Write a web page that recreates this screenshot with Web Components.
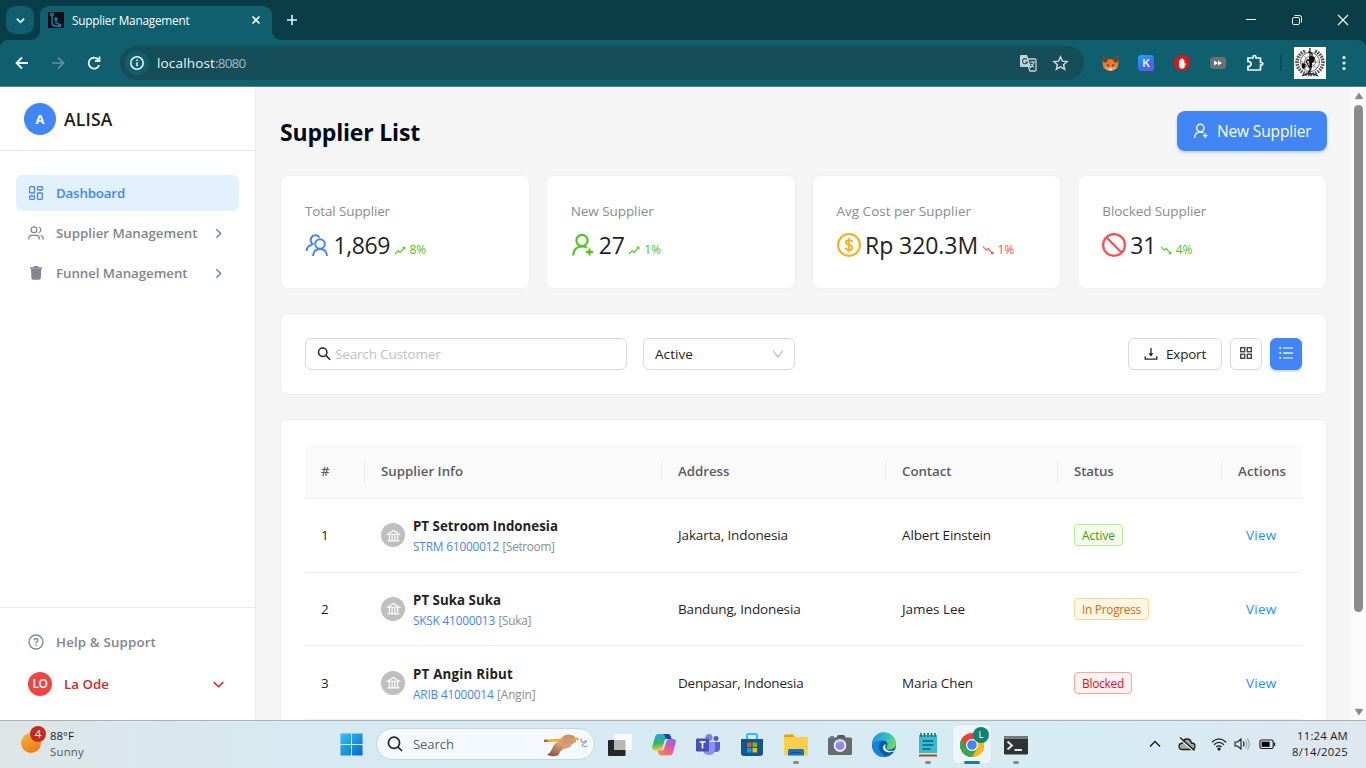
<!DOCTYPE html>
<html lang="en">
<head>
<meta charset="utf-8">
<title>Supplier Management</title>
<style>
html,body{margin:0;height:100%;overflow:hidden}
body{font:13.500px/20px "Open Sans","Noto Sans",sans-serif;color:#1c1c1c;background:#f5f5f5}
</style>
</head>
<body>
<desktop-screen></desktop-screen>
<script>
const bank = '<path d="M2 7.500 9 3l7 4.500zM4 8v7M7.300 8v7M10.700 8v7M14 8v7M2 15.500h14"/>';
const S = (c, w, body) => `<g fill="none" stroke="${c}" stroke-width="${w}">${body}</g>`;
const ICONS = {
  chevDown: ['0 0 12 12', S('currentColor', 1.8, '<path d="M2 4l4 4 4-4"/>')],
  chevThin: ['0 0 12 12', S('currentColor', 1.350, '<path d="M1.600 3.800l4.400 4.300 4.400-4.300"/>')],
  favicon: ['0 0 16 16', '<rect width="16" height="16" fill="#0b0f14"/>' + S('#1687bd', 1.3, '<circle cx="4" cy="2.500" r="1.300"/><path d="M4 4v7q0 3 3 3h3"/><circle cx="11.500" cy="13.500" r="1.300"/><circle cx="8" cy="7" r="1"/><path d="M8 8v3l3 1"/>')],
  x: ['0 0 12 12', S('currentColor', 1.6, '<path d="M2.500 2.500l7 7m0-7l-7 7"/>')],
  plus: ['0 0 12 12', S('currentColor', 1.6, '<path d="M1 6h10M6 1v10"/>')],
  min: ['0 0 12 12', S('#fff', 1, '<path d="M1 5.500h10"/>')],
  restore: ['0 0 12 12', S('#fff', 1, '<rect x="1.500" y="3.500" width="7" height="7" rx="1.200"/><path d="M3.500 1.500h5q2 0 2 2v5"/>')],
  close: ['0 0 12 12', S('#fff', 1.100, '<path d="M1 1l10 10m0-10L1 11"/>')],
  back: ['0 0 16 16', S('currentColor', 1.8, '<path d="M14 8H3M8 2.500L2.500 8 8 13.500"/>')],
  fwd: ['0 0 16 16', S('currentColor', 1.7, '<path d="M2 8h11M8 2.500L13.500 8 8 13.500"/>')],
  reload: ['0 0 16 16', S('currentColor', 1.8, '<path d="M13.200 10.200A5.500 5.500 0 1 1 12.300 4.500L13.500 6"/><path d="M13.500 1.500V6H9"/>')],
  info: ['0 0 16 16', S('currentColor', 1.5, '<circle cx="8" cy="8" r="6.200"/><path d="M8 7.200v4M8 4.500v1.500"/>')],
  translate: ['0 0 18 18', '<path d="M1 2q0-1 1-1h6l4 12H2q-1 0-1-1z" fill="#c3d2d6"/><path d="M9 5h7q1 0 1 1v10q0 1-1 1h-5l-1.500-4" fill="none" stroke="#c3d2d6" stroke-width="1.300"/><path d="M8 5.500A2.600 2.600 0 1 0 8.500 8H6.300" fill="none" stroke="#27525c" stroke-width="1.100"/><path d="M11 8h5M13.500 7v1M15 8q-1 4-4 6M12 10l3 3.500" fill="none" stroke="#c3d2d6" stroke-width="1.100"/>'],
  star: ['0 0 16 16', S('#c9d7da', 1.4, '<path d="M8 1.800l1.800 4 4.400.4-3.300 2.900 1 4.300L8 11.100l-3.900 2.300 1-4.300L1.800 6.200l4.400-.4z"/>')],
  fox: ['0 0 18 18', '<path d="M1 1L7 4.500h4L17 1l.3 7.500-.8 5L12.500 16l-1.500 1H7l-1.500-1-4-2.500-.8-5z" fill="#ee7a30"/><path d="M1 1L7 4.500 4 8.500 1.200 7zM17 1l-6 3.500 3 4L16.800 7z" fill="#7d3c14"/><path d="M4.500 9.500l3 1-.5 2zM13.500 9.500l-3 1 .5 2z" fill="#24344a"/><path d="M2 13.500l4.500-.5.5 3.500-1.500-.5zM16 13.500l-4.500-.5-.5 3.500 1.500-.5z" fill="#f6a467"/><path d="M7 13.500h4l-.500 3h-3z" fill="#e3d6ca"/>'],
  puzzle: ['0 0 18 18', S('#f1f8fa', 1.700, '<path d="M2 4h5V3q0-1.500 1.500-1.500T10 3v1h4.500v4.500h1q1.300 0 1.300 1.300t-1.300 1.300h-1V16H2v-3.500q3 0 3-2.600T2 7.500z"/>')],
  emblem: ['0 0 32 32', '<rect width="32" height="32" fill="#fff"/><g fill="none" stroke="#555"><path d="M11 4Q3 8 3 16q1 9 12 12M21 4q8 4 8 12-1 9-12 12" stroke-width="3.600" stroke-dasharray="1.700 1"/><circle cx="16" cy="15" r="9.500" stroke-width=".9"/><circle cx="16" cy="15" r="5.500" stroke-width=".8"/><path d="M7 15h18M9.500 8.500l13 13M22.500 8.500l-13 13" stroke-width=".6"/><path d="M16 1v28M14 5q5 0 4 4t-4 4 0 5 3 4-3 4M8 29q8-5 16 0" stroke="#222" stroke-width="1.300"/></g><path d="M8 16l4 1-1 2 1 1-2 2-2-1zM15 10l4-1 2 2-1 4-2 1v5l-2-1z" fill="#111"/>'],
  dots: ['0 0 16 16', '<g fill="#edf6f8"><circle cx="8" cy="2.500" r="1.600"/><circle cx="8" cy="8" r="1.600"/><circle cx="8" cy="13.500" r="1.600"/></g>'],
  dash: ['0 0 16 16', S('currentColor', 1.300, '<rect x="1.700" y="1.700" width="4.800" height="6.300" rx=".8"/><rect x="9.500" y="1.700" width="4.800" height="3.300" rx=".8"/><rect x="1.700" y="11" width="4.800" height="3.300" rx=".8"/><rect x="9.500" y="8" width="4.800" height="6.300" rx=".8"/>')],
  users: ['0 0 16 16', S('currentColor', 1.250, '<circle cx="6" cy="4.800" r="2.900"/><path d="M.8 14.600v-1.500q0-2.800 2.800-2.800h4.800q2.800 0 2.800 2.800v1.500M10.700 2a2.900 2.900 0 0 1 0 5.600M12.600 10.500q2.600.5 2.600 2.800v1.300"/>')],
  trash: ['0 0 16 16', '<path d="M2 2.300h3.500L6.300 1h3.400l.8 1.300H14v1.400H2zM3 4h10.300l-.5 9q-.1 1.700-1.600 1.700H5q-1.500 0-1.600-1.700z" fill="currentColor"/>'],
  right: ['0 0 12 12', S('currentColor', 1.400, '<path d="M4 2l4 4-4 4"/>')],
  help: ['0 0 16 16', S('currentColor', 1.300, '<circle cx="8" cy="8" r="7"/><path d="M6 6.400Q6.200 4.500 8.100 4.500 10 4.600 10 6.200q0 1-1.100 1.500-.9.400-.9 1.500M8 10.500v1.400"/>')],
  team: ['0 0 24 24', S('#4285f4', 2, '<circle cx="15" cy="11" r="4.800"/><path d="M8 23q.500-7 7-7t7 7M1.500 18q.5-5 5.500-6.200M8.500 11.500A4.800 4.800 0 1 1 14.500 4.500"/>')],
  userAdd: ['0 0 24 24', S('#52c41a', 2.200, '<circle cx="11" cy="7.500" r="5.600"/><path d="M2.200 22.500q.4-9 8.800-9 3.200 0 5 1.500M18.500 15.500v7M15 19h7"/>')],
  userAddW: ['0 0 24 24', S('#fff', 2, '<circle cx="11" cy="7.500" r="5.600"/><path d="M2.200 22.500q.4-9 8.800-9 3.200 0 5 1.500M18.500 15.500v7M15 19h7"/>')],
  dollar: ['0 0 24 24', S('#faad14', 2, '<circle cx="12" cy="12" r="10.900"/>') + S('#faad14', 1.700, '<path d="M15.300 9Q15 7 12 7T8.800 9.300q0 2 3.200 2.600t3.300 2.700Q15.200 17 12 17t-3.400-2.400M12 5v14"/>')],
  stop: ['0 0 24 24', S('#ff4d4f', 2.200, '<circle cx="12" cy="12" r="10.900"/><path d="M4.500 4.500l15 15"/>')],
  up: ['0 0 12 12', S('currentColor', 1.100, '<path d="M1 10l3.200-3.200 2 1.600 4-4.700"/>') + '<path d="M8.300 2.800h3.100v3.100z" fill="currentColor"/>'],
  down: ['0 0 12 12', S('currentColor', 1.100, '<path d="M1 2.500l3.200 3.700 2-1.600 4 4.700"/>') + '<path d="M8.300 10.200h3.100V7.100z" fill="currentColor"/>'],
  search: ['0 0 14 14', S('currentColor', 1.500, '<circle cx="5.700" cy="5.300" r="4.200"/><path d="M8.800 8.400l4.400 4.400"/>')],
  selDown: ['0 0 12 12', S('#bfbfbf', 1.200, '<path d="M1 2.700l5 6.500 5-6.500"/>')],
  export: ['0 0 14 14', S('#262626', 1.300, '<path d="M7 1v8M1.200 9.200v3h11.600v-3"/>') + '<path d="M4.500 6.300h5L7 9.400z" fill="#262626"/>'],
  grid: ['0 0 14 14', S('#444', 1.400, '<rect x="1.700" y="1.700" width="4" height="4"/><rect x="8.300" y="1.700" width="4" height="4"/><rect x="1.700" y="8.300" width="4" height="4"/><rect x="8.300" y="8.300" width="4" height="4"/>')],
  list: ['0 0 14 14', '<g fill="#fff"><path d="M4 1.500h10v1H4zM4 11.500h10v1H4z"/><path d="M4 6h10v2H4z" opacity=".65"/><circle cx="1.200" cy="2" r="1"/><circle cx="1.200" cy="7" r="1"/><circle cx="1.200" cy="12" r="1"/></g>'],
  bank: ['0 0 18 18', S('#fff', 1.350, bank)],
  win: ['0 0 24 24', '<defs><linearGradient id="w" x2="1" y2="1"><stop stop-color="#35c0fa"/><stop offset="1" stop-color="#0669c8"/></linearGradient></defs><path d="M.5.500h11v11H.5zM12.500.5h11v11h-11zM.5 12.500h11v11H.5zM12.500 12.500h11v11h-11z" fill="url(#w)"/>'],
  search2: ['0 0 16 16', S('#222', 1.700, '<circle cx="7" cy="6.800" r="5.600"/><path d="M11 11l4 4"/>')],
  hand: ['0 0 46 26', '<defs><linearGradient id="h" x1=".9" y1="0" x2=".2" y2="1"><stop stop-color="#c08a66"/><stop offset=".5" stop-color="#d9a27c"/><stop offset="1" stop-color="#8d5a3c"/></linearGradient></defs><path d="M4 24q4-3 6-9 2-4 6-6 4-6 9-6.500 5 0 7 3 2 1.500 1 4-2 2.500-4 3-1 4-6 4.500-4 1-6 3.500-1 3-2 4-6 1.500-11-.5z" fill="url(#h)"/><path d="M1 8l5-.3L34 6l3 1.200-3 1.300L6 10.300 1 10.300z" fill="#f4a92d"/><path d="M1 8h3.500v2.300H1z" fill="#d8455f"/><path d="M19 8q4-4.500 8-3.500l4 2.500-4 1.500q-3 1-4 4.500" fill="#cf9470"/><path d="M38 7l1 4 4-2q2 1-2 3t0 3 3-1" fill="none" stroke="#75828a" stroke-width=".9"/>'],
  task: ['0 0 24 24', '<rect y="7" width="17.500" height="16" rx="1" fill="#262626"/><rect x="6" y="1" width="18" height="16" rx="1" fill="#fafafa"/><rect x="6" y="7" width="11.500" height="10" fill="#b5b7b8"/>'],
  copilot: ['0 0 24 24', '<defs><linearGradient id="ca" x2=".2" y2="1"><stop stop-color="#17a9ef"/><stop offset=".6" stop-color="#35b36a"/><stop offset="1" stop-color="#ecd02b"/></linearGradient><linearGradient id="cb" x1="1" x2=".2" y2="1"><stop stop-color="#7c6cf5"/><stop offset=".5" stop-color="#e455a8"/><stop offset="1" stop-color="#ff8746"/></linearGradient></defs><path d="M7 1h9q2 0 2.500 2l1 3h-4.500q-2 0-2.600 2l-2 7q-.7 2.500-3 2.500H3q-3.500 0-2.700-4L3 4q.7-3 4-3z" fill="url(#ca)"/><path d="M17 22.500H9q-2 0-2.600-2l-1-3h4.100q2 0 2.600-2l2.200-7Q15 6 17.500 6H21q3.500 0 2.700 4L21 19.500q-.7 3-4 3z" fill="url(#cb)"/><path d="M12 1h4q2 0 2.500 2l1 3h-4q-2 0-2.500-2z" fill="#1548bd"/>'],
  teams: ['0 0 24 24', '<circle cx="13" cy="4.500" r="3.600" fill="#7b83eb"/><circle cx="20" cy="5.500" r="2.500" fill="#5059c9"/><path d="M15 9h9v6q0 4-4 4h-4z" fill="#5b61d0"/><path d="M7 9h12v7q0 6-6 6t-6-6z" fill="#8b91ee"/><rect y="5.500" width="13" height="13" rx="1.200" fill="#464eb8"/><path d="M3.500 9h6M6.500 9v6.500" stroke="#fff" stroke-width="1.700"/>'],
  store: ['0 0 24 24', '<path d="M7 6V2.500Q7 1 8.500 1h7Q17 1 17 2.500V6" fill="none" stroke="#35b7f1" stroke-width="2"/><path d="M1 6h22v14q0 3-3 3H4q-3 0-3-3z" fill="#12558f"/><path d="M7 9.500h4.500V14H7z" fill="#f25022"/><path d="M12.500 9.500H17V14h-4.500z" fill="#7fba00"/><path d="M7 15h4.500v4.500H7z" fill="#00a4ef"/><path d="M12.500 15H17v4.500h-4.500z" fill="#ffb900"/>'],
  folder: ['0 0 24 24', '<path d="M0 3q0-1.500 1.500-1.500H9L11 4v4H0z" fill="#e0a10c"/><rect y="4" width="24" height="18.500" rx="1" fill="#ffce48"/><path d="M4 18q0-2 2-2h12q2 0 2 2v4.500H4z" fill="#1670bd"/><path d="M7 19h10v1H7z" fill="#0c4f90"/>'],
  camera: ['0 0 24 24', '<path d="M2 3h4v3H2z" fill="#25a3e3"/><path d="M8 5l2-3h6l2 3z" fill="#54595e"/><rect y="4.500" width="24" height="17.500" rx="1.500" fill="#666b70"/><circle cx="12" cy="12.500" r="6.300" fill="#f7f7f7"/><circle cx="12" cy="12.500" r="4.600" fill="#9d83e6"/><path d="M7.800 11a4.600 4.600 0 0 1 7-2.200z" fill="#73c7ef"/>'],
  edge: ['0 0 24 24', '<defs><linearGradient id="e" x1="0" y1=".2" x2="1" y2=".6"><stop stop-color="#1793dc"/><stop offset=".6" stop-color="#32c3c7"/><stop offset="1" stop-color="#76da47"/></linearGradient></defs><circle cx="12" cy="12" r="12" fill="#0c59a4"/><path d="M0 12A12 12 0 0 1 24 10.500c0 4-3 6-7 6-3 0-3-1.500-2-3 1.500-3-.5-6-4-6-4 0-8 1-11 4.500z" fill="url(#e)"/><path d="M0 12q4-5 9.500-4Q6 11 7 16q1.500 5 7 7.800Q2 25 0 12z" fill="#1685d9"/><path d="M13 14q1 4 6 4 2 0 4-1.200l-1 1.800q-9 2.500-11-3-.5-3 2.500-4.600.5 1.300-.5 3z" fill="#e4f1f6"/>'],
  note: ['0 0 24 24', '<path d="M3 2h18v18H3z" fill="#38bad3"/><path d="M3 20h18v3.500H3z" fill="#a34e16"/><path d="M3 20h18v1.500H3z" fill="#e7e1d4"/><path d="M5 0v4M8.500 0v4M12 0v4M15.500 0v4M19 0v4" stroke="#12606f" stroke-width="1.400"/><path d="M6.500 8h11M6.500 12h11M6.500 16h8" stroke="#12606f" stroke-width="1.600"/>'],
  chrome: ['0 0 24 24', '<circle cx="12" cy="12" r="12" fill="#ea4335"/><path d="M1.600 6A12 12 0 0 0 12 24l5.300-9H6.700z" fill="#34a853"/><path d="M22.400 6A12 12 0 0 1 12 24l5.200-9L12 6z" fill="#fbbc05"/><circle cx="12" cy="12" r="6" fill="#fff"/><circle cx="12" cy="12" r="4.800" fill="#4285f4"/>'],
  term: ['0 0 24 24', '<rect y="3" width="24" height="18.500" rx="1.300" fill="#303234"/><path d="M0 6V4.300Q0 3 1.300 3h21.400Q24 3 24 4.300V6z" fill="#77797b"/><path d="M3.500 8.500L8 12.500l-4.500 4M10.500 17h7.500" fill="none" stroke="#e5e5e5" stroke-width="2"/>'],
  trayUp: ['0 0 12 12', S('#1a1a1a', 1.400, '<path d="M1 8.500l5-5 5 5"/>')],
  cloud: ['0 0 18 18', '<path d="M4.500 14.500q-3.500 0-3.500-3T4.500 8q1-4 4.500-4t4.500 4q3.500 0 3.500 3.200t-3.500 3.300z" fill="#a5abad" stroke="#1d1d1d" stroke-width="1.300"/><path d="M1.500 3.800l14 12.500" stroke="#eaf2f5" stroke-width="1.200"/><path d="M2 2.500l14.500 13" stroke="#1d1d1d" stroke-width="1.400"/>'],
  wifi: ['0 0 16 16', S('#1b1b1b', 1.200, '<path d="M.8 6.300q7.200-7 14.400 0M3 8.700q5-4.700 10 0M5.300 11q2.700-2.400 5.400 0"/>') + '<circle cx="8" cy="13" r="1.500"/>'],
  vol: ['0 0 16 16', S('#1b1b1b', 1.100, '<path d="M1 6h2.500L7 3v10l-3.500-3H1zM9.200 5.700q1.700 2.300 0 4.600"/><path d="M11.300 4q3 4 0 8M13.300 2.500q4 5.500 0 11" opacity=".35"/>')],
  batt: ['0 0 18 16', S('#1b1b1b', 1.200, '<rect x="1" y="4" width="14" height="8.500" rx="1.800"/><path d="M16.500 6.500v3.500"/>') + '<rect x="2.800" y="5.700" width="8.500" height="5.100"/>'],
  sbUp: ['0 0 10 10', '<path d="M5 1.500l4 6q0 .7-.7.700H1.700Q1 8.200 1 7.500z" fill="#8b8b8b"/>'],
  sbDown: ['0 0 10 10', '<path d="M5 8.500l4-6q0-.7-.7-.7H1.700Q1 1.800 1 2.500z" fill="#8b8b8b"/>']
};
const define = (name, css, html) => customElements.define(name, class extends HTMLElement {
  connectedCallback() {
    if (this.shadowRoot) return;
    const root = this.attachShadow({ mode: 'open' });
    const t = document.createElement('template');
    const a = k => this.getAttribute(k) || '';
    t.innerHTML = `<style>:host{display:block;box-sizing:border-box}*{box-sizing:border-box}${css}</style>${typeof html === 'function' ? html(a) : html}`;
    root.append(t.content.cloneNode(true));
  }
});

/* ui-icon: name, s = width, h = height when it is not square */
define('ui-icon', ':host{display:inline-flex;flex:none}svg{display:block;overflow:visible}', a => {
  const [vb, body] = ICONS[a('name')];
  return `<svg viewBox="${vb}" width="${a('s')}" height="${a('h') || a('s')}" ${a('h') ? 'preserveAspectRatio="none"' : ''}>${body}</svg>`;
});

/* ---------- browser window frame ---------- */
define('tab-strip', `
:host{height:40px;background:#093e48;display:flex;color:#e9f4f6;padding-left:6px}
.menu{width:28px;height:28px;margin:6px 6px 0 0;border-radius:9px;background:#0f5f6f;display:grid;place-items:center}
.tab{position:relative;width:232px;height:34px;margin-top:6px;border-radius:9px 9px 0 0;background:#0f5f6f;display:flex;align-items:center;padding:0 10px 6px 8px;font-size:11.800px;color:#fff}
.tab::before,.tab::after{content:"";position:absolute;bottom:0;width:9px;height:9px}
.tab::before{left:-9px;background:radial-gradient(circle at 0 0,transparent 8.500px,#0f5f6f 9px)}
.tab::after{right:-9px;background:radial-gradient(circle at 100% 0,transparent 8.500px,#0f5f6f 9px)}
.tab fit-text{margin:0 auto 0 8px}
.add{margin:14px auto 0 14px}
.win{display:flex}.win span{width:46px;height:40px;display:grid;place-items:center}`, `
<div class="menu"><ui-icon name="chevDown" s="11"></ui-icon></div>
<div class="tab"><ui-icon name="favicon" s="16"></ui-icon><fit-text w="117.500">Supplier Management</fit-text><ui-icon name="x" s="12"></ui-icon></div>
<ui-icon class="add" name="plus" s="12"></ui-icon>
<div class="win"><span><ui-icon name="min" s="12"></ui-icon></span><span><ui-icon name="restore" s="12"></ui-icon></span><span><ui-icon name="close" s="12"></ui-icon></span></div>`);

define('address-bar', `
:host{height:47px;background:#093e48}
.bar{height:47px;background:#0f5f6f;border-bottom:1px solid #4e8793;border-radius:8px 8px 0 0;display:flex;align-items:center;color:#edf6f8;padding:0 0 0 14px}
.nav{display:flex;gap:20px}.nav .f{color:#64929d}
.omni{width:964px;height:34px;flex:none;margin-left:18px;border-radius:17px;background:#154d59;display:flex;align-items:center;padding:0 15px 0 5px}
.i{width:24px;height:24px;border-radius:50%;background:#0f5f6f;display:grid;place-items:center;margin-right:8px}
.port{color:#a4b9be;margin-right:auto}.omni .tr{margin-right:15px}
.ext{display:flex;align-items:center;margin-left:18px;gap:20px}
.ext ui-icon:first-child{margin-right:-1px}
.k{width:16px;height:16px;border-radius:3px;background:linear-gradient(150deg,#16b2ef,#4067f4 60%,#8b4df2);display:grid;place-items:center;font:700 11px/16px Lato,sans-serif}
.ad{width:16px;height:16px;border-radius:50%;background:#e3130f;display:grid;place-items:center}
.ff{width:16px;height:12px;border-radius:3px;background:#6e6f70;display:grid;place-items:center}
.sep{width:2px;height:16px;background:#0d4b57;margin:0 12px 0 16px}.dots{margin-left:10px}`, `
<div class="bar"><div class="nav"><ui-icon name="back" s="16"></ui-icon><ui-icon class="f" name="fwd" s="16"></ui-icon><ui-icon name="reload" s="16"></ui-icon></div>
<div class="omni"><span class="i"><ui-icon name="info" s="16"></ui-icon></span><fit-text w="58">localhost</fit-text><fit-text class="port" w="30.500">:8080</fit-text><ui-icon class="tr" name="translate" s="18"></ui-icon><ui-icon name="star" s="17"></ui-icon></div>
<div class="ext"><ui-icon name="fox" s="17"></ui-icon><span class="k">K</span><span class="ad"><svg width="10" height="11" viewBox="0 0 10 11"><path d="M2 5V2.500q.7-.7 1.300 0V1.200q.8-.8 1.400 0V.7q.8-.7 1.300 0v1q.9-.6 1.400.300V6l1-1q1 0 .8.800L7.500 9.500Q6.500 11 4.500 10.700 2 10.300 2 8z" fill="#fff"/></svg></span><span class="ff"><svg width="10" height="6" viewBox="0 0 10 6"><path d="M1 .5L5 3 1 5.500zM5 .5L9 3 5 5.500z" fill="#fff"/></svg></span><ui-icon name="puzzle" s="18"></ui-icon></div>
<span class="sep"></span><ui-icon name="emblem" s="32"></ui-icon><ui-icon class="dots" name="dots" s="16"></ui-icon></div>`);

/* ---------- sidebar ---------- */
define('nav-item', `
:host{height:36px;border-radius:6px;display:flex;align-items:center;padding:0 13px 0 12px;color:#7f868e;font-weight:600;font-size:13.300px}
:host([active]){background:#e3f1fe;color:#4285f4}
.t{margin-left:12px;margin-right:auto}.r{margin-right:1px}`,
a => `<ui-icon name="${a('icon')}" s="16"></ui-icon><span class="t"><slot></slot></span>${a('more') ? '<ui-icon class="r" name="right" s="13"></ui-icon>' : ''}`);

define('side-bar', `
:host{width:256px;background:#fff;border-right:1px solid #e9eaed;display:flex;flex-direction:column}
.brand{height:64px;border-bottom:1px solid #e7e8eb;display:flex;align-items:center;padding-left:24px;gap:8px;font-size:17.500px;font-weight:600}
.brand fit-text{margin-top:1px}
.a{width:32px;height:32px;border-radius:50%;background:#4285f4;color:#fff;font-size:13px;font-weight:700;display:grid;place-items:center}
nav{padding:24px 16px;display:grid;gap:4px}
footer{margin-top:auto;height:113px;border-top:1px solid #e9eaed;padding:16px}
.me{display:flex;align-items:center;height:36px;margin-top:6px;padding:0 14px 0 12px;color:#dc2626;font-weight:600;font-size:13.300px}
.me span{width:24px;height:24px;border-radius:50%;background:#f04444;color:#fff;font-size:12px;letter-spacing:-.6px;display:grid;place-items:center;margin-right:12px}
.me fit-text{margin-right:auto}`, `
<div class="brand"><span class="a">A</span><fit-text w="48.500">ALISA</fit-text></div>
<nav><nav-item icon="dash" active><fit-text w="69">Dashboard</fit-text></nav-item><nav-item icon="users" more="1"><fit-text w="141.500">Supplier Management</fit-text></nav-item><nav-item icon="trash" more="1"><fit-text w="131.500">Funnel Management</fit-text></nav-item></nav>
<footer><nav-item icon="help"><fit-text w="100">Help &amp; Support</fit-text></nav-item><div class="me"><span>LO</span><fit-text w="45">La Ode</fit-text><ui-icon name="chevThin" s="13"></ui-icon></div></footer>`);

/* ---------- page content ---------- */
define('stat-card', `
:host{height:114px;background:#fff;border:1px solid #f0f0f0;border-radius:8px;padding:24px}
.l{height:22px;line-height:22px;color:#8c8c8c}
.v{display:flex;align-items:center;height:38px;margin-top:4px;font-size:23px;color:#1f1f1f}
.v .n{margin-top:-1px}
.v ui-icon.m{margin-right:var(--gap,4.500px);margin-top:-1px}.ar{margin:9px 4px 0 3.500px}.p{font-size:12px;margin-top:9px}`,
a => `<div class="l"><fit-text w="${a('lw')}">${a('label')}</fit-text></div><div class="v"><ui-icon class="m" name="${a('icon')}" s="24"></ui-icon><fit-text class="n" w="${a('vw')}">${a('value')}</fit-text><ui-icon class="ar" name="${a('trend')}" s="12" style="color:${a('c')}"></ui-icon><fit-text class="p" w="16.500" style="color:${a('c')}">${a('pct')}</fit-text></div>`);

define('filter-bar', `
:host{height:82px;background:#fff;border:1px solid #f0f0f0;border-radius:8px;padding:24px;display:flex;gap:8px}
div{height:32px;border:1px solid #d9d9d9;border-radius:6px;display:flex;align-items:center;background:#fff}
.s{width:322px;padding-left:11px;color:#bfbfbf}.s ui-icon{color:#262626;margin-right:4px}
.sel{width:152px;margin:0 auto 0 8px;padding:0 10px 0 11px;justify-content:space-between}
.ex{width:94px;padding:0 15px;justify-content:space-between}
.b{width:32px;justify-content:center;padding-bottom:2px}.ex,.b{box-shadow:0 2px 0 rgba(0,0,0,.02)}
.on{background:#4285f4;border-color:#4285f4;box-shadow:0 2px 2px rgba(66,133,244,.25)}`, `
<div class="s"><ui-icon name="search" s="14"></ui-icon><fit-text w="105.500">Search Customer</fit-text></div>
<div class="sel"><fit-text w="38">Active</fit-text><ui-icon name="selDown" s="12"></ui-icon></div>
<div class="ex"><ui-icon name="export" s="14"></ui-icon><fit-text w="40">Export</fit-text></div>
<div class="b"><ui-icon name="grid" s="14"></ui-icon></div><div class="b on"><ui-icon name="list" s="14"></ui-icon></div>`);

define('status-tag', `
:host{display:inline-block;height:22px;border:1px solid #b7eb8f;background:#f6ffed;color:#389e0d;border-radius:4px;padding:0 7px;font-size:11.800px;line-height:21px}
:host([kind=wait]){border-color:#ffd591;background:#fff7e6;color:#d46b08}
:host([kind=bad]){border-color:#ffa39e;background:#fff1f0;color:#cf1322}`, '<slot></slot>');

const cols = 'display:grid;grid-template-columns:60px 297px 224px 172px 164px 80px;align-items:center';
define('supplier-row', `
:host{${cols};height:73.667px;border-bottom:1px solid #f0f0f0;color:#1f1f1f}
:host>*{margin-left:16px}
.n{display:flex;align-items:center;gap:8px}
.ic{width:24px;height:24px;border-radius:50%;background:#bfbfbf;display:grid;place-items:center}
b{display:block;height:20px;font-weight:700;font-size:13.300px;line-height:23px}
.sub{height:20px;line-height:22px;font-size:11.800px;display:flex;gap:3.500px;color:#8c8c8c}.sub .c{color:#4285f4}
.v{color:#1890ff;margin-left:24px}status-tag{justify-self:start}`,
a => `<fit-text w="8">${a('n')}</fit-text><div class="n"><span class="ic"><ui-icon name="bank" s="15"></ui-icon></span><div><b><fit-text w="${a('w1')}">${a('name')}</fit-text></b><div class="sub"><fit-text class="c" w="${a('w2')}">${a('code')}</fit-text><fit-text w="${a('w3')}">[${a('alias')}]</fit-text></div></div></div><span><fit-text w="${a('w4')}">${a('city')}, Indonesia</fit-text></span><span><fit-text w="${a('w5')}">${a('contact')}</fit-text></span><status-tag kind="${a('kind')}"><fit-text w="${a('w6')}">${a('status')}</fit-text></status-tag><fit-text class="v" w="30.500">View</fit-text>`);

define('supplier-table', `
:host{background:#fff;border:1px solid #f0f0f0;border-radius:8px;padding:24px;height:420px;flex:none}
.h{${cols};height:55px;background:#fafafa;border-bottom:1px solid #f0f0f0;border-radius:8px 8px 0 0;font-weight:600;font-size:13.300px;color:#5c5c5c}
.h div{height:22px;line-height:22px;padding-left:16px;border-right:1px solid #ececec}.h div:last-child{border:0}`, `
<div class="h"><div><fit-text w="8.500">#</fit-text></div><div><fit-text w="82">Supplier Info</fit-text></div><div><fit-text w="51.500">Address</fit-text></div><div><fit-text w="49.500">Contact</fit-text></div><div><fit-text w="39.500">Status</fit-text></div><div><fit-text w="48">Actions</fit-text></div></div>
<supplier-row n="1" name="PT Setroom Indonesia" w1="145" code="STRM 61000012" w2="86" alias="Setroom" w3="52" city="Jakarta" w4="110" contact="Albert Einstein" w5="89" status="Active" w6="33" kind="ok"></supplier-row>
<supplier-row n="2" name="PT Suka Suka" w1="88" code="SKSK 41000013" w2="82" alias="Suka" w3="32.500" city="Bandung" w4="122.500" contact="James Lee" w5="63" status="In Progress" w6="59" kind="wait"></supplier-row>
<supplier-row n="3" name="PT Angin Ribut" w1="100" code="ARIB 41000014" w2="80.500" alias="Angin" w3="38.500" city="Denpasar" w4="125.500" contact="Maria Chen" w5="71" status="Blocked" w6="42" kind="bad"></supplier-row>`);

define('supplier-page', `
:host{flex:1;background:#f5f5f5;padding:24px 24px 0;display:flex;flex-direction:column;gap:24px;overflow:hidden}
header{display:flex;justify-content:space-between;align-items:center;height:40px;flex:none}
h1{margin:1px 0 0;font-size:23px;line-height:32px;font-weight:700;color:#020817}
.btn{width:150px;height:40px;border-radius:8px;background:#4285f4;color:#fff;display:flex;align-items:center;padding-left:16px;gap:8px;font-size:15.500px;box-shadow:0 2px 3px rgba(66,133,244,.3)}
.cards{display:grid;grid-template-columns:repeat(4,1fr);gap:16px}filter-bar{flex:none}`, `
<header><h1><fit-text w="140">Supplier List</fit-text></h1><div class="btn"><ui-icon name="userAddW" s="16"></ui-icon><fit-text w="94.500">New Supplier</fit-text></div></header>
<div class="cards"><stat-card label="Total Supplier" lw="85" icon="team" value="1,869" vw="56.500" trend="up" pct="8%" c="#52c41a"></stat-card><stat-card style="--gap:4px" label="New Supplier" lw="83" icon="userAdd" value="27" vw="26" trend="up" pct="1%" c="#52c41a"></stat-card><stat-card label="Avg Cost per Supplier" lw="134.500" icon="dollar" value="Rp 320.3M" vw="113" trend="down" pct="1%" c="#ff4d4f"></stat-card><stat-card style="--gap:4px" label="Blocked Supplier" lw="104" icon="stop" value="31" vw="26" trend="down" pct="4%" c="#52c41a"></stat-card></div>
<filter-bar></filter-bar><supplier-table></supplier-table>`);

define('scroll-rail', `
:host{width:15px;background:#fcfcfc;display:flex;flex-direction:column;align-items:center;padding:4px 0 3px}
i{width:9px;height:507px;border-radius:5px;background:#8b8b8b;margin:4px 0 auto}`, `<ui-icon name="sbUp" s="10"></ui-icon><i></i><ui-icon name="sbDown" s="10"></ui-icon>`);

/* ---------- task bar ---------- */
define('task-button', `
:host{position:relative;width:44px;height:47px;display:grid;place-items:center;flex:none}
:host([current])::before{content:"";position:absolute;left:3px;top:4px;width:38px;height:38px;border-radius:4px;background:#eef5fa;box-shadow:0 0 1px #aebec8}
ui-icon{position:relative}
.m{position:absolute;bottom:4px;left:19px;width:6px;height:3px;border-radius:2px;background:#858b8e}
:host([current]) .m{left:14px;width:16px;background:#1b7f91}
.l{position:absolute;left:23px;top:6px;width:16px;height:16px;border-radius:50%;background:#0c8474;color:#fff;font-size:9.500px;line-height:16px;text-align:center}`,
a => `<ui-icon name="${a('icon')}" s="24"></ui-icon>${a('open') ? '<span class="m"></span>' : ''}${a('badge') ? `<span class="l">${a('badge')}</span>` : ''}`);

define('task-bar', `
:host{height:48px;border-top:1px solid #a9b4b9;background:linear-gradient(90deg,#dfe4e4 0,#dbe7ec 100px,#d7e9f1 300px,#d7ebf2 1130px,#dfe6f0 1366px);display:flex;color:#1b1b1b;font-size:11.300px;line-height:16px}
.wx{width:329px;flex:none;display:flex;padding-left:21px}
.sun{position:relative;width:20px;height:20px;margin:12px 9px 0 0;border-radius:50%;background:linear-gradient(150deg,#f5b83a,#ee6f11)}
.sun i{position:absolute;left:9px;top:-7px;width:16px;height:16px;border-radius:50%;background:#c42b1c;color:#fff;font:11.500px/16px "Open Sans",sans-serif;text-align:center}
.wx p,.ck{margin:7px 0 0;display:flex;flex-direction:column}.wx p fit-text+fit-text{color:#51585c}
.wn{width:44px;flex:none;display:grid;place-items:center;margin-right:3px}
.sr{width:219px;height:32px;flex:none;margin:7px 3px 0 0;border:1px solid #c3d5de;border-radius:16px;background:#f3f9fc;display:flex;align-items:center;padding:0 5px 0 10px;font-size:13px;color:#5a5f62}
.sr fit-text{margin:0 auto 0 10px}
.tray{display:flex;align-items:center;margin-left:auto;padding-right:15px}
.tray>ui-icon{margin-top:-1px}
.ck{width:60px;height:40px;align-items:flex-end;align-self:flex-start}`, `
<div class="wx"><span class="sun"><i>4</i></span><p><fit-text w="24">88°F</fit-text><fit-text w="34">Sunny</fit-text></p></div>
<div class="wn"><ui-icon name="win" s="23"></ui-icon></div>
<div class="sr"><ui-icon name="search2" s="16"></ui-icon><fit-text w="41">Search</fit-text><ui-icon name="hand" s="46" h="25"></ui-icon></div>
<task-button icon="task"></task-button><task-button icon="copilot"></task-button><task-button icon="teams"></task-button><task-button icon="store"></task-button><task-button icon="folder" open="1"></task-button><task-button icon="camera"></task-button><task-button icon="edge"></task-button><task-button icon="note" open="1"></task-button><task-button icon="chrome" open="1" current badge="L"></task-button><task-button icon="term" open="1"></task-button>
<div class="tray"><ui-icon name="trayUp" s="12" style="margin-right:17px"></ui-icon><ui-icon name="cloud" s="18" style="margin-right:15px"></ui-icon><ui-icon name="wifi" s="16" style="margin-right:7px"></ui-icon><ui-icon name="vol" s="16" style="margin-right:9px"></ui-icon><ui-icon name="batt" s="17" h="16" style="margin-right:12px"></ui-icon><div class="ck" style="margin-right:3px"><fit-text w="51">11:24 AM</fit-text><fit-text w="56">8/14/2025</fit-text></div></div>`);

define('desktop-screen', `
:host{height:768px;width:1366px;display:flex;flex-direction:column}
main{flex:1;min-height:0;display:flex;overflow:hidden}`, `
<tab-strip></tab-strip><address-bar></address-bar><main><side-bar></side-bar><supplier-page></supplier-page><scroll-rail></scroll-rail></main><task-bar></task-bar>`);

/* fit-text: one line of text, tracked so that it takes up w pixels */
customElements.define('fit-text', class extends HTMLElement {
  connectedCallback() {
    if (this.shadowRoot) return;
    this.attachShadow({ mode: 'open' }).innerHTML = '<style>:host{display:inline-block;width:max-content;white-space:pre;flex:none}</style><slot></slot>';
    const n = this.textContent.length, w = this.getBoundingClientRect().width;
    this.style.letterSpacing = ((this.getAttribute('w') - w) / n).toFixed(3) + 'px';
  }
});
</script>
</body>
</html>
